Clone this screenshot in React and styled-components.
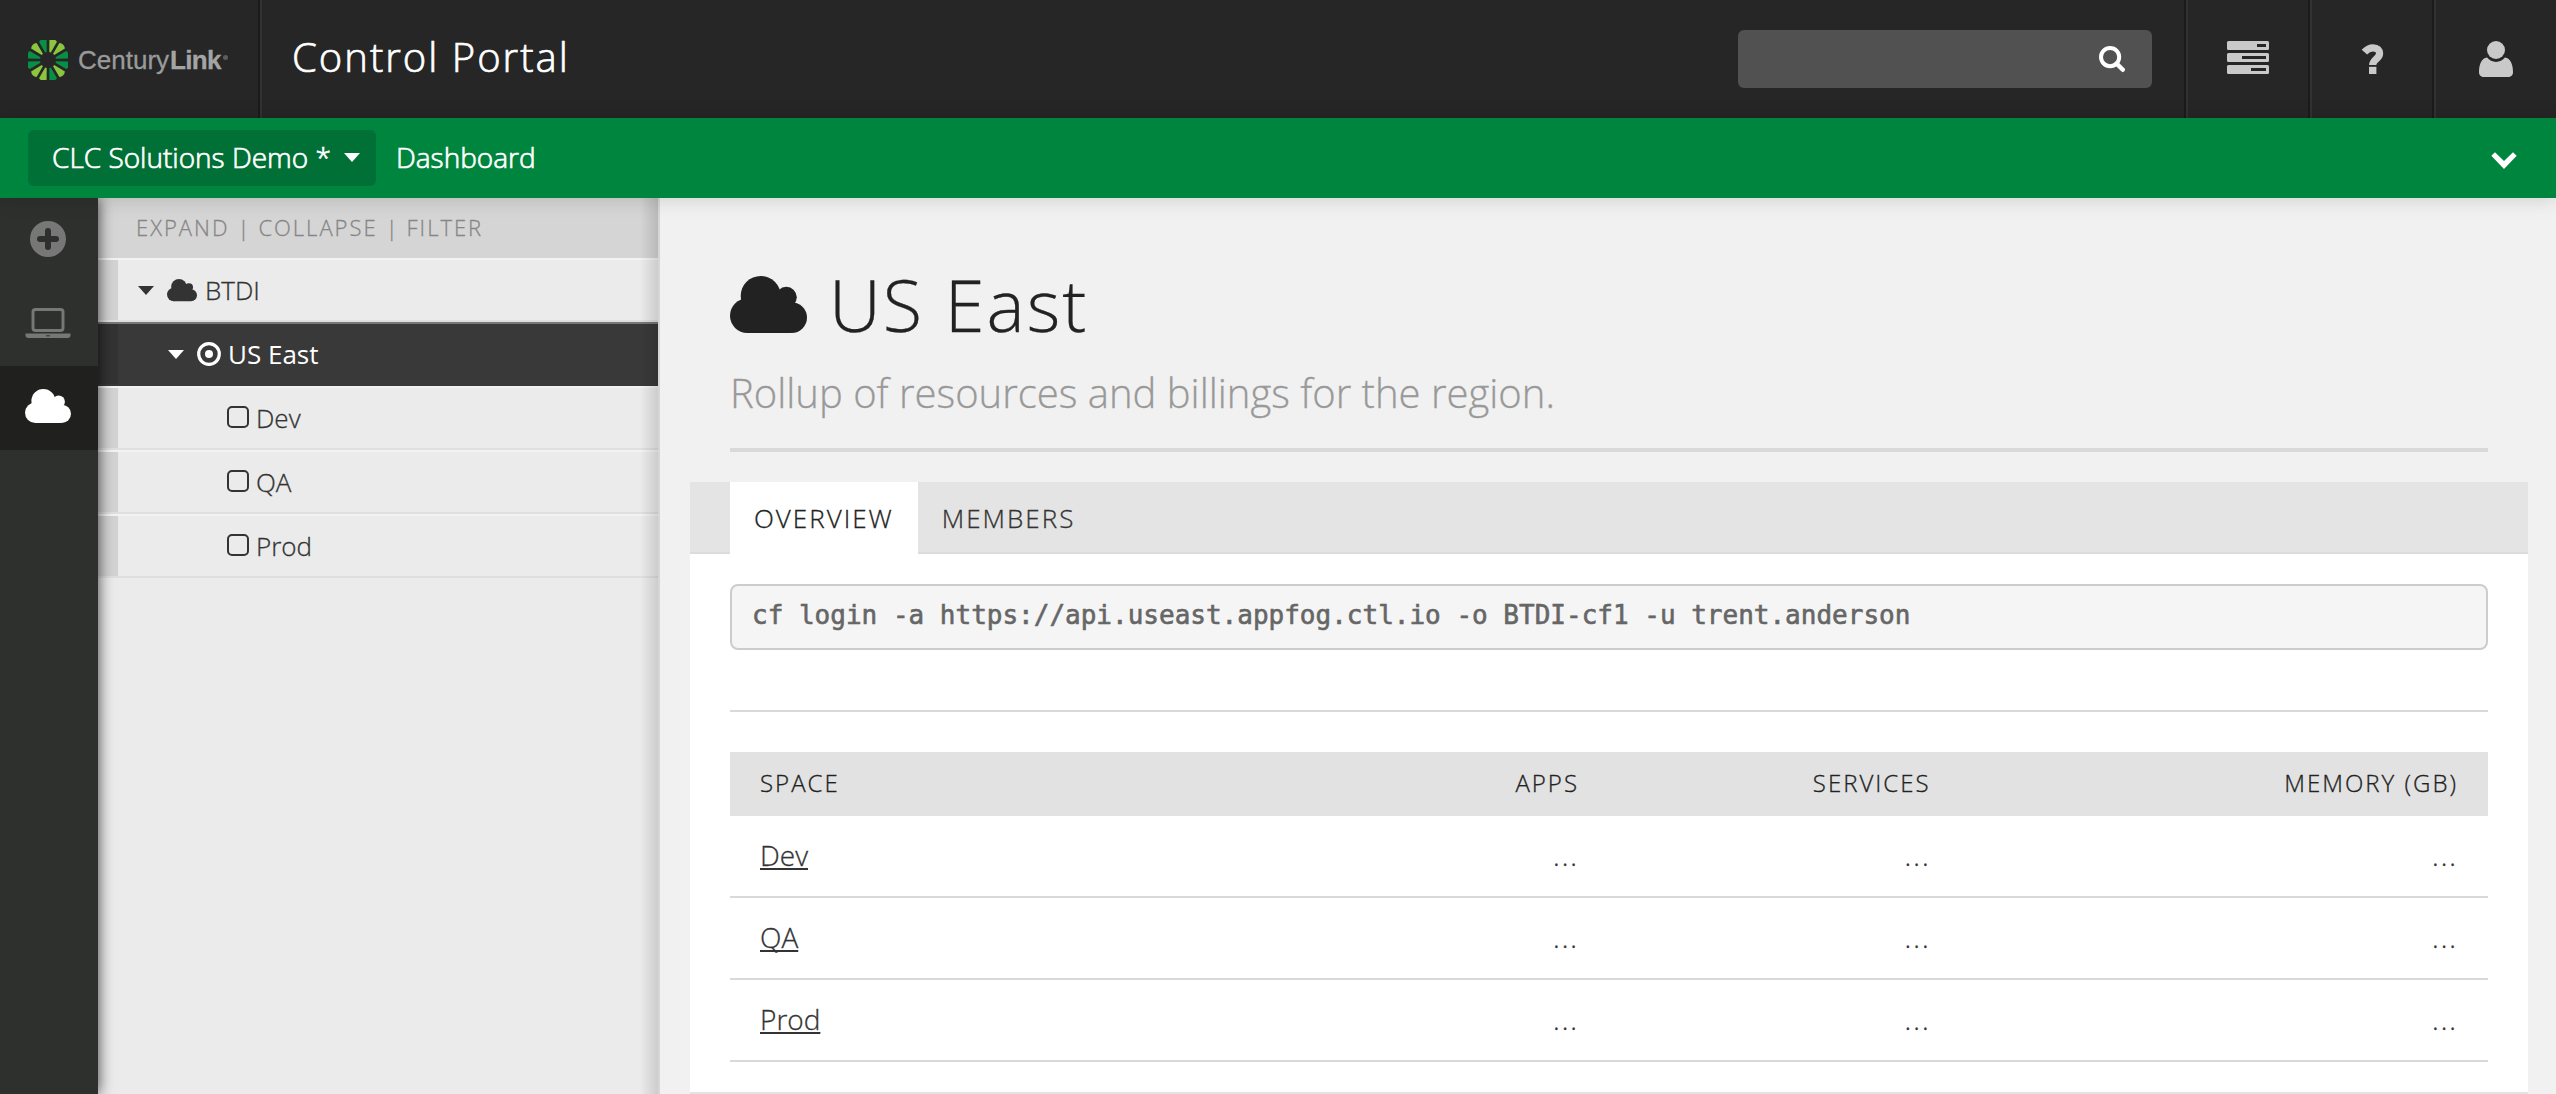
import React from "react";
import styled, { createGlobalStyle, css } from "styled-components";

const GlobalStyle = createGlobalStyle`
  *, *::before, *::after { box-sizing: border-box; }
  body {
    margin: 0;
    background: #f1f1f1;
    font-family: "Open Sans", "Noto Sans", sans-serif;
    font-weight: 300;
    color: #222;
    -webkit-text-stroke: 0.3px;
  }
`;

const Page = styled.div`
  display: flex;
  flex-direction: column;
  height: 100vh;
  overflow: hidden;
`;

const Svg = styled.svg`
  display: block;
  flex: none;
  overflow: ${(p) => (p.$clip ? "hidden" : "visible")};
`;

/* ---------- top bar ---------- */

const TopBar = styled.header`
  display: flex;
  flex: none;
  height: 118px;
  background: #262626;
`;

const LogoCell = styled.div`
  display: flex;
  align-items: center;
  width: 260px;
  padding: 2px 0 0 28px;
  border-right: 2px solid #1b1b1b;
  box-shadow: 2px 0 0 #323232;
`;

const LogoText = styled.div`
  display: flex;
  align-items: flex-start;
  margin-left: 10px;
  font: 400 26px/30px "Liberation Sans", sans-serif;
  letter-spacing: 0;
  color: #999b9b;

  b {
    font-weight: 700;
    letter-spacing: -0.7px;
    margin-left: 1px;
    color: #a3a5a5;
  }
`;

const LogoMark = styled.i`
  width: 5px;
  height: 5px;
  margin: 10px 0 0 2px;
  border-radius: 50%;
  background: #5c5c5c;
`;

const PortalTitle = styled.h1`
  flex: 1;
  margin: 0;
  padding-left: 32px;
  font-size: 40px;
  font-weight: 300;
  line-height: 113px;
  letter-spacing: 2px;
  color: #fff;
  -webkit-text-stroke: 0.7px;
`;

const SearchBox = styled.div`
  display: flex;
  align-items: center;
  justify-content: flex-end;
  width: 414px;
  height: 58px;
  margin: 30px 32px 0 0;
  padding-right: 27px;
  border-radius: 6px;
  background: #515151;
`;

const TopButton = styled.div`
  display: flex;
  justify-content: center;
  width: 124px;
  padding-top: ${(p) => p.$top}px;
  border-left: 2px solid #1b1b1b;
  box-shadow: inset 2px 0 0 #323232;
  padding-left: 2px;
`;

/* ---------- green bar ---------- */

const NavBar = styled.nav`
  position: relative;
  z-index: 3;
  display: flex;
  align-items: center;
  flex: none;
  height: 80px;
  padding: 0 39px 0 28px;
  background: #00853e;
  box-shadow: 0 0 20px rgba(0, 0, 0, 0.16);
  color: #fff;
  font-size: 28px;
  font-weight: 300;
  line-height: 54px;
  -webkit-text-stroke: 0.7px;
`;

const AccountButton = styled.div`
  display: flex;
  align-items: center;
  justify-content: space-between;
  width: 348px;
  height: 56px;
  padding: 0 16px 2px 24px;
  border-radius: 6px;
  background: #007037;
`;

const Crumb = styled.span`
  flex: 1;
  margin-left: 20px;
  padding-bottom: 2px;
`;

const Caret = styled.i`
  width: 0;
  height: 0;
  border: 8px solid transparent;
  border-top: 9px solid currentColor;
  border-bottom: 0;
`;

/* ---------- body ---------- */

const Body = styled.div`
  display: flex;
  flex: 1;
  min-height: 0;
`;

const Rail = styled.aside`
  position: relative;
  z-index: 2;
  width: 98px;
  flex: none;
  background: #2e302d;
  box-shadow: 0 0 14px rgba(0, 0, 0, 0.75);
`;

const RailItem = styled.div`
  display: flex;
  align-items: center;
  justify-content: center;
  height: 84px;
  padding-right: 2px;
  padding-bottom: ${(p) => p.$bottom || 0}px;
  color: #777;
  ${(p) =>
    p.$active &&
    css`
      color: #fff;
      background: #20211f;
    `}
`;

const Tree = styled.aside`
  position: relative;
  width: 562px;
  flex: none;
  background: #ebebeb;
  border-right: 2px solid #d6d6d6;

  &::after {
    content: "";
    position: absolute;
    inset: 0 0 0 auto;
    width: 18px;
    background: linear-gradient(to right, rgba(0, 0, 0, 0), rgba(0, 0, 0, 0.13));
  }
`;

const TreeTools = styled.div`
  display: flex;
  height: 60px;
  padding-left: 38px;
  background: #d5d5d5;
  font-size: 22px;
  line-height: 58px;
  letter-spacing: 2px;
  color: #868686;

  span + span::before {
    content: "|";
    margin: 0 7px 0 8px;
  }
`;

const TreeRows = styled.div`
  display: flex;
  flex-direction: column;
`;

const TreeRow = styled.div`
  display: flex;
  align-items: center;
  height: 64px;
  padding-left: ${(p) => p.$indent}px;
  border-top: 2px solid ${(p) => (p.$selected ? "#777" : "#f3f3f3")};
  border-bottom: 2px solid ${(p) => (p.$selected ? "#393939" : "#dfdfdf")};
  box-shadow: inset 20px 0 0 rgba(0, 0, 0, 0.1);
  background: ${(p) => (p.$selected ? "#393939" : "transparent")};
  color: ${(p) => (p.$selected ? "#fff" : "#333")};
  font-size: 26px;
  font-weight: ${(p) => (p.$selected ? 400 : 300)};
  -webkit-text-stroke: ${(p) => (p.$selected ? 0 : 0.3)}px;
  line-height: 58px;
`;

const RowIcon = styled.span`
  margin: 0 ${(p) => p.$gap}px 0 ${(p) => p.$before}px;
`;

const RowLabel = styled.span`
  padding-bottom: ${(p) => (p.$drop ? 0 : 1)}px;
`;

const CheckSquare = styled.i`
  width: 22px;
  height: 22px;
  margin: 0 7px 2px 0;
  border: 2px solid #333;
  border-radius: 5px;
`;

/* ---------- main ---------- */

const Main = styled.main`
  display: flex;
  flex-direction: column;
  flex: 1;
  min-width: 0;
`;

const Heading = styled.div`
  height: 254px;
  flex: none;
  margin: 0 68px 30px 70px;
  padding-top: 56px;
  border-bottom: 4px solid #d9d9d9;
`;

const RegionTitle = styled.h2`
  display: flex;
  align-items: center;
  gap: 22px;
  height: 100px;
  margin: 0;
  font-size: 72px;
  font-weight: 300;
  line-height: 100px;
  letter-spacing: 2px;
`;

const Lead = styled.p`
  margin: 10px 0 0;
  font-size: 40px;
  line-height: 58px;
  color: #999;
`;

const Panel = styled.section`
  width: 1838px;
  height: 612px;
  flex: none;
  margin-left: 30px;
  background: #fff;
  border-bottom: 2px solid #e3e3e3;
`;

const Tabs = styled.div`
  display: flex;
  height: 72px;
  padding-left: 40px;
  background: #e4e4e4;
  box-shadow: inset 0 -2px 0 #dcdcdc;
`;

const Tab = styled.div`
  padding: 0 24px;
  font-size: 26px;
  line-height: 72px;
  letter-spacing: 2px;
  color: ${(p) => (p.$active ? "#222" : "#333")};
  background: ${(p) => (p.$active ? "#fff" : "transparent")};
`;

const PanelBody = styled.div`
  padding: 30px 40px 0;
`;

const Command = styled.pre`
  height: 66px;
  margin: 0 0 60px;
  padding: 0 20px;
  border: 2px solid #ccc;
  border-radius: 8px;
  background: #f5f5f5;
  color: #666;
  font: 400 26px/58px "DejaVu Sans Mono", monospace;
  -webkit-text-stroke: 0.6px;
`;

const Rule = styled.hr`
  height: 2px;
  margin: 0 0 40px;
  border: 0;
  background: #d9d9d9;
`;

const GridRow = styled.div`
  display: grid;
  grid-template-columns: 30% 20% 20% 30%;
  letter-spacing: 2px;

  > * {
    padding: 0 30px;
    text-align: right;
  }
  > :first-child {
    text-align: left;
  }
`;

const HeadRow = styled(GridRow)`
  height: 64px;
  background: #e2e2e2;
  font-size: 24px;
  line-height: 61px;
`;

const DataRow = styled(GridRow)`
  height: 82px;
  border-bottom: 2px solid #d9d9d9;
  font-size: 28px;
  line-height: 78px;
  color: #333;
`;

const SpaceLink = styled.a`
  letter-spacing: 0;
  color: #333;
  text-decoration: underline;
  text-decoration-thickness: 2px;
  text-underline-offset: 2px;
  text-decoration-skip-ink: none;
`;

/* ---------- icons ---------- */

const RAYS = "LLDDLDLLDDLD".split("");

function Burst() {
  return (
    <Svg $clip width="40" height="40" viewBox="-20 -20 40 40">
      {RAYS.map((c, i) => (
        <path
          key={i}
          d="M-0.8 -8 L-3.9 -20 Q0 -23 3.9 -20 L0.8 -8Z"
          transform={`rotate(${15 + i * 30})`}
          fill={c === "L" ? "#8cc63f" : "#079045"}
        />
      ))}
    </Svg>
  );
}

function Cloud({ width }) {
  return (
    <Svg width={width} height={(width * 57) / 77} viewBox="0 0 77 57" fill="currentColor">
      <circle cx="30.7" cy="20" r="20" />
      <circle cx="56.3" cy="21.3" r="10.5" />
      <circle cx="17.3" cy="39.7" r="17.3" />
      <circle cx="61.6" cy="41.6" r="15.4" />
      <path d="M17 57V24L30 15L60 26V57Z" />
    </Svg>
  );
}

const Search = () => (
  <Svg width="26" height="26" viewBox="0 0 26 26" fill="none" stroke="#fff">
    <circle cx="11.1" cy="11.1" r="9.1" strokeWidth="4" />
    <path d="M17.6 17.6L23.8 23.8" strokeWidth="4.4" strokeLinecap="round" />
  </Svg>
);

const Servers = () => (
  <Svg width="42" height="33" viewBox="0 0 42 33" fill="#c9c9c9">
    {[0, 12, 24].map((y) => (
      <rect key={y} y={y} width="42" height="9" rx="1.5" />
    ))}
    <path fill="#262626" d="M30 3h9v3h-9zM15 15h24v3H15zM24 27h15v3H24z" />
  </Svg>
);

const Help = () => (
  <Svg width="22" height="30" viewBox="-1 0 22 30">
    <path
      d="M2.4 8.2C5 5.2 7.6 3.8 11 3.8C15.4 3.8 17.6 6.3 17.6 9.6C17.6 15 10.7 15 10.7 21"
      fill="none"
      stroke="#c9c9c9"
      strokeWidth="7.2"
    />
    <path d="M7 22.8h7.4v7.2H7z" fill="#c9c9c9" />
  </Svg>
);

const User = () => (
  <Svg width="34" height="36" viewBox="0 0 34 36" fill="#c9c9c9">
    <circle cx="17" cy="9" r="9" />
    <path d="M8 16.6C2.4 17 0 24 0 31C0 34.5 2 36 5 36H29C32 36 34 34.5 34 31C34 24 31.6 17 26 16.6A11.6 11.6 0 0 1 8 16.6Z" />
  </Svg>
);

const Chevron = () => (
  <Svg width="26" height="17" viewBox="0 -2 26 17" fill="#fff">
    <path d="M0.3 3.8L4 0.3L13 9L22 0.3L25.7 3.8L13 17Z" />
  </Svg>
);

const Plus = () => (
  <Svg width="36" height="36" viewBox="0 0 36 36">
    <circle cx="18" cy="18" r="18" fill="currentColor" />
    <path d="M18 10V26M10 18H26" stroke="#2e302d" strokeWidth="6" strokeLinecap="round" />
  </Svg>
);

const Laptop = () => (
  <Svg width="46" height="30" viewBox="0 0 46 30">
    <rect x="8" y="1.5" width="30" height="21" rx="2.5" fill="none" stroke="currentColor" strokeWidth="3" />
    <path d="M0.5 25.5H45.5V27Q45.5 30 42.5 30H3.5Q0.5 30 0.5 27Z" fill="currentColor" />
    <path d="M21 27.3h4v1h-4z" fill="#2e302d" />
  </Svg>
);

const Target = () => (
  <Svg width="24" height="24" viewBox="0 0 24 24">
    <circle cx="12" cy="12" r="10.3" fill="none" stroke="currentColor" strokeWidth="3.2" />
    <circle cx="12" cy="12" r="4" fill="currentColor" />
  </Svg>
);

const SPACES = ["Dev", "QA", "Prod"];

export default function App() {
  return (
    <Page>
      <GlobalStyle />
      <TopBar>
        <LogoCell>
          <Burst />
          <LogoText>
            Century<b>Link</b>
            <LogoMark />
          </LogoText>
        </LogoCell>
        <PortalTitle>Control Portal</PortalTitle>
        <SearchBox>
          <Search />
        </SearchBox>
        <TopButton $top={41}>
          <Servers />
        </TopButton>
        <TopButton $top={44}>
          <Help />
        </TopButton>
        <TopButton $top={41}>
          <User />
        </TopButton>
      </TopBar>

      <NavBar>
        <AccountButton>
          CLC Solutions Demo *
          <Caret />
        </AccountButton>
        <Crumb>Dashboard</Crumb>
        <Chevron />
      </NavBar>

      <Body>
        <Rail>
          <RailItem $bottom={2}>
            <Plus />
          </RailItem>
          <RailItem $bottom={3}>
            <Laptop />
          </RailItem>
          <RailItem $active $bottom={4}>
            <Cloud width={46} />
          </RailItem>
        </Rail>

        <Tree>
          <TreeTools>
            <span>EXPAND</span>
            <span>COLLAPSE</span>
            <span>FILTER</span>
          </TreeTools>
          <TreeRows>
            <TreeRow $indent={40}>
              <Caret />
              <RowIcon $before={13} $gap={8}>
                <Cloud width={30} />
              </RowIcon>
              <RowLabel $drop>BTDI</RowLabel>
            </TreeRow>
            <TreeRow $indent={70} $selected>
              <Caret />
              <RowIcon $before={13} $gap={7}>
                <Target />
              </RowIcon>
              <RowLabel $drop>US East</RowLabel>
            </TreeRow>
            {SPACES.map((name) => (
              <TreeRow key={name} $indent={129}>
                <CheckSquare />
                <RowLabel>{name}</RowLabel>
              </TreeRow>
            ))}
          </TreeRows>
        </Tree>

        <Main>
          <Heading>
            <RegionTitle>
              <Cloud width={77} />
              US East
            </RegionTitle>
            <Lead>Rollup of resources and billings for the region.</Lead>
          </Heading>
          <Panel>
            <Tabs>
              <Tab $active>OVERVIEW</Tab>
              <Tab>MEMBERS</Tab>
            </Tabs>
            <PanelBody>
              <Command>cf login -a https://api.useast.appfog.ctl.io -o BTDI-cf1 -u trent.anderson</Command>
              <Rule />
              <HeadRow>
                <span>SPACE</span>
                <span>APPS</span>
                <span>SERVICES</span>
                <span>MEMORY (GB)</span>
              </HeadRow>
              {SPACES.map((name) => (
                <DataRow key={name}>
                  <span>
                    <SpaceLink>{name}</SpaceLink>
                  </span>
                  <span>...</span>
                  <span>...</span>
                  <span>...</span>
                </DataRow>
              ))}
            </PanelBody>
          </Panel>
        </Main>
      </Body>
    </Page>
  );
}
